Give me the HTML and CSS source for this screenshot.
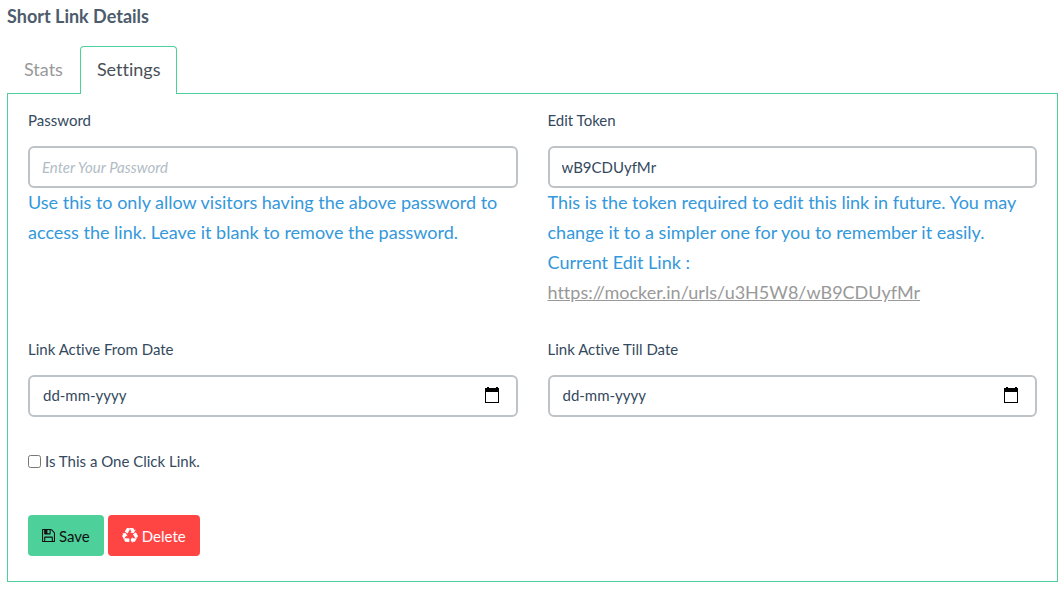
FILE: index.html
```html
<!DOCTYPE html>
<html lang="en">
<head>
<meta charset="utf-8">
<title>Short Link Details</title>
<link rel="stylesheet" href="styles.css">
</head>
<body>
<main class="page">
  <h1 class="title">Short Link Details</h1>
  <nav class="tabs">
    <a class="tab" href="#stats">Stats</a>
    <a class="tab tab-active" href="#settings" aria-current="page">Settings</a>
  </nav>
  <form class="panel">
    <div class="row row-main">
      <div class="field">
        <label class="label" for="password">Password</label>
        <input class="control" id="password" type="text" placeholder="Enter Your Password">
        <p class="help">Use this to only allow visitors having the above password to access the link. Leave it blank to remove the password.</p>
      </div>
      <div class="field">
        <label class="label" for="token">Edit Token</label>
        <input class="control" id="token" type="text" value="wB9CDUyfMr">
        <p class="help">This is the token required to edit this link in future. You may change it to a simpler one for you to remember it easily.<br>Current Edit Link :<br><a class="edit-link" href="#edit">https://mocker.in/urls/u3H5W8/wB9CDUyfMr</a></p>
      </div>
    </div>
    <div class="row row-dates">
      <div class="field">
        <label class="label" for="from">Link Active From Date</label>
        <div class="control date">
          <input class="date-input" id="from" type="text" placeholder="dd-mm-yyyy">
          <button class="date-button" type="button" aria-label="Choose from date"><svg class="calendar" viewBox="0 0 15 16"><path fill-rule="evenodd" d="M2 0h2v1h7V0h2v1h1v15H0V1h2zM1 5v10h12V5z"/></svg></button>
        </div>
      </div>
      <div class="field">
        <label class="label" for="till">Link Active Till Date</label>
        <div class="control date">
          <input class="date-input" id="till" type="text" placeholder="dd-mm-yyyy">
          <button class="date-button" type="button" aria-label="Choose till date"><svg class="calendar" viewBox="0 0 15 16"><path fill-rule="evenodd" d="M2 0h2v1h7V0h2v1h1v15H0V1h2zM1 5v10h12V5z"/></svg></button>
        </div>
      </div>
    </div>
    <div class="check-row">
      <input class="check" id="once" type="checkbox">
      <label for="once">Is This a One Click Link.</label>
    </div>
    <div class="actions">
      <button class="button save" type="button"><svg class="icon-save" viewBox="0 0 1536 1536"><path d="M384 1408h768v-384H384v384zm896 0h128V512q0-14-10-38.500t-20-34.500l-281-281q-10-10-34-20t-39-10v416q0 40-28 68t-68 28H352q-40 0-68-28t-28-68V128H128v1280h128V992q0-40 28-68t68-28h832q40 0 68 28t28 68v416zM896 480V160q0-13-9.500-22.500T864 128H672q-13 0-22.500 9.500T640 160v320q0 13 9.500 22.500T672 512h192q13 0 22.500-9.500T896 480zm640 32v928q0 40-28 68t-68 28H96q-40 0-68-28t-28-68V96q0-40 28-68T96 0h928q40 0 88 20t76 48l280 280q28 28 48 76t20 88z"/></svg>Save</button>
      <button class="button delete" type="button"><svg class="icon-recycle" viewBox="0 0 1792 1792"><path d="M836 1169l-15 368-2 22-420-29q-36-3-67-31.500t-47-65.500q-11-27-14.500-55t4-65 12-55 21.500-64 19-53q78 12 509 28zM449 583l180 379-147-92q-63 72-111.500 144.500t-72.500 125-39.500 94.500-18.500 63l-4 21-190-357q-17-26-18-56t6-47l8-18q35-63 114-188l-140-86zm1231 517l-188 359q-12 29-36.500 46.500t-43.500 20.500l-18 4q-71 7-219 12l8 164-230-367 211-362 7 173q170 16 283 5t170-33zM895 176q-47 63-265 435L313 424l-19-12L519 56q20-31 60-45t80-10q24 2 48.500 12t42 21 41.500 33 36 34.500 36 39.500 32 35zm655 307l212 363q18 37 12.500 76t-27.500 74q-13 20-33 37t-38 28-48.500 22-47 16-51.500 14-46 12q-34-72-265-436l313-195zm-143-226l142-83-220 373-419-20 151-86q-34-89-75-166t-75.500-123.500-64.500-80-47-46.500l-17-13 405 1q31-3 58 10.500t39 28.500l11 15q39 61 112 190z"/></svg>Delete</button>
    </div>
  </form>
</main>
</body>
</html>
```
FILE: styles.css
```css
* {
  box-sizing: border-box;
}

body {
  margin: 0;
  background: #fff;
  color: #34495e;
  font-family: Lato, sans-serif;
  font-size: 15px;
  font-variant-ligatures: none;
  line-height: 20px;
}

input,
button {
  font: inherit;
}

.page {
  padding: 4px 6px 7px 7px;
}

.title {
  margin: 0;
  color: #4d5c6c;
  font-size: 18px;
  font-weight: 700;
  line-height: 24px;
}

.tabs {
  display: flex;
  margin: 18px 0 -1px;
}

.tab {
  padding: 10px 16px 12px;
  border: 1px solid transparent;
  border-bottom: 0;
  border-radius: 4px 4px 0 0;
  color: #999;
  font-size: 18px;
  line-height: 25px;
  text-decoration: none;
}

.tab-active {
  position: relative;
  border-color: #4dd09a;
  background: #fff;
  color: #495057;
}

.panel {
  padding: 16px 20px 25px;
  border: 1px solid #4dd09a;
}

.row {
  display: grid;
  grid-template-columns: 1fr 1fr;
  gap: 30px;
}

.row-dates {
  margin-top: 32px;
}

.label {
  display: block;
  margin-bottom: 16px;
}

.control {
  display: block;
  width: 100%;
  height: 42px;
  padding: 0 12px;
  border: 2px solid #bdc3c7;
  border-radius: 6px;
  background: #fff;
  color: #34495e;
}

.control::placeholder {
  color: #b2bcc5;
  font-style: italic;
}

.help {
  margin: -1px 0 0;
  color: #3498db;
  font-size: 18px;
  line-height: 30px;
}

.edit-link {
  color: #999;
}

.date {
  display: flex;
  align-items: center;
  padding: 0 16px 2px 13px;
}

.date-input {
  flex: 1;
  min-width: 0;
  padding: 0;
  border: 0;
  background: none;
}

.date-input::placeholder {
  color: #34495e;
  opacity: 1;
}

.date-button {
  display: flex;
  padding: 0;
  border: 0;
  background: none;
}

.calendar {
  width: 15px;
  height: 16px;
}

.check-row {
  display: flex;
  align-items: center;
  gap: 4px;
  margin-top: 34px;
}

.check {
  width: 13px;
  height: 13px;
  margin: 0;
}

.actions {
  display: flex;
  gap: 4px;
  margin-top: 44px;
}

.button {
  display: flex;
  align-items: center;
  gap: 4px;
  height: 41px;
  padding: 0 14px;
  border: 0;
  border-radius: 4px;
}

.save {
  background: #4dd09a;
  color: #111;
}

.delete {
  background: #ff4444;
  color: #fff;
}

.icon-save {
  width: 13px;
  height: 13px;
  fill: currentColor;
}

.icon-recycle {
  width: 16px;
  height: 16px;
  fill: currentColor;
}
```
